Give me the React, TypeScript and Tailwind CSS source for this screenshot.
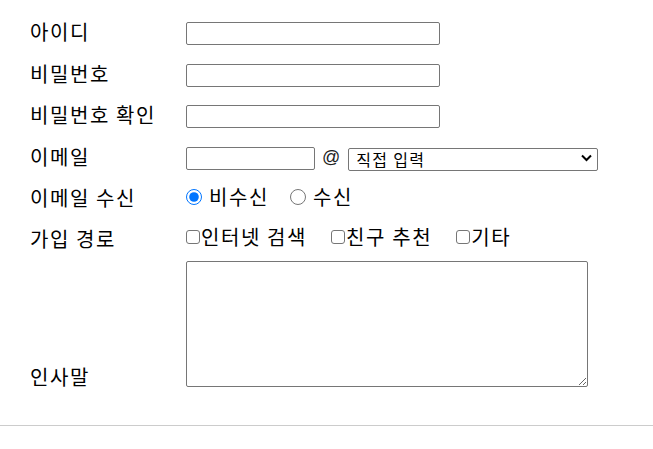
import React from "react";

const font = { fontFamily: '"Noto Sans CJK KR", "Noto Sans", sans-serif' };

function Label({ children }: { children: React.ReactNode }) {
  return (
    <div className="w-[156px] shrink-0 text-[20px] leading-[23px] tracking-[1.6px] pb-[5px] text-black">
      {children}
    </div>
  );
}

const inputCls =
  "h-[23px] border border-[#767676] rounded-[2px] bg-white px-[2px] text-[16px] outline-none";

const checkCls =
  "appearance-none w-[14px] h-[14px] m-0 border border-[#767676] rounded-[3px] bg-white shrink-0";

export default function App() {
  return (
    <div className="w-[653px] h-[449px] bg-white text-black" style={font}>
      <div className="pl-[30px] pt-[22px] flex flex-col">
        <div className="flex items-center h-[23px]">
          <Label>아이디</Label>
          <input type="text" className={`${inputCls} w-[254px]`} />
        </div>
        <div className="flex items-center h-[23px] mt-[19px]">
          <Label>비밀번호</Label>
          <input type="password" className={`${inputCls} w-[254px]`} />
        </div>
        <div className="flex items-center h-[23px] mt-[18px]">
          <Label>비밀번호 확인</Label>
          <input type="password" className={`${inputCls} w-[254px]`} />
        </div>
        <div className="flex items-center h-[23px] mt-[19px]">
          <Label>이메일</Label>
          <input type="text" className={`${inputCls} w-[129px]`} />
          <span
            className="ml-[7px] mr-[8px] text-[18px] leading-[23px] pb-[2px] text-[#222]"
            style={{ fontFamily: '"Liberation Sans", Arial, sans-serif' }}
          >
            @
          </span>
          <div className="relative w-[250px] h-[23px]">
            <select
              className="appearance-none w-[250px] h-[23px] border border-[#767676] rounded-[2px] bg-white pl-[7px] text-[16px] tracking-[1.3px] leading-[21px] text-black outline-none"
              defaultValue="direct"
            >
              <option value="direct">직접 입력</option>
              <option value="naver">naver.com</option>
              <option value="gmail">gmail.com</option>
            </select>
            <svg
              className="absolute right-[6px] top-[7px] pointer-events-none"
              width="11"
              height="8"
              viewBox="0 0 11 8"
            >
              <path d="M1 1.5 L5.5 6 L10 1.5" fill="none" stroke="#000" strokeWidth="2" />
            </svg>
          </div>
        </div>
        <div className="flex items-center h-[23px] mt-[18px]">
          <Label>이메일 수신</Label>
          <div className="flex items-center pb-[6px] text-[20px] leading-[23px] tracking-[1.6px]">
            <input type="radio" name="recv" defaultChecked className="w-[16px] h-[16px] m-0" />
            <span className="ml-[7px]">비수신</span>
            <input type="radio" name="recv" className="w-[16px] h-[16px] m-0 ml-[21px]" />
            <span className="ml-[7px]">수신</span>
          </div>
        </div>
        <div className="flex items-center h-[23px] mt-[18px]">
          <Label>가입 경로</Label>
          <div className="flex items-center pb-[8px] text-[20px] leading-[23px] tracking-[1.6px]">
            <input type="checkbox" className={checkCls} />
            <span className="ml-[1px]">인터넷 검색</span>
            <input type="checkbox" className={`${checkCls} ml-[24px]`} />
            <span className="ml-[1px]">친구 추천</span>
            <input type="checkbox" className={`${checkCls} ml-[24px]`} />
            <span className="ml-[1px]">기타</span>
          </div>
        </div>
        <div className="flex items-end mt-[9px]">
          <div className="w-[156px] shrink-0 text-[20px] leading-[20px] tracking-[1.6px]">인사말</div>
          <textarea className="w-[402px] h-[126px] border border-[#767676] rounded-[2px] bg-white block outline-none" />
        </div>
      </div>
      <div className="mt-[38px] border-t border-[#cccccc]" />
    </div>
  );
}
